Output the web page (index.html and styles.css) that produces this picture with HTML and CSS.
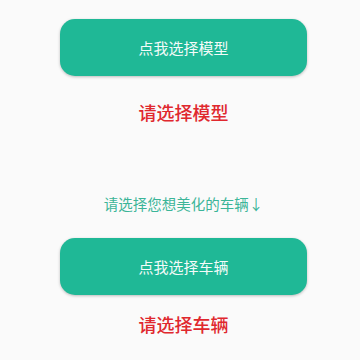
FILE: index.html
```html
<!DOCTYPE html>
<html lang="zh-CN">
<head>
    <meta charset="UTF-8">
    <title>选择</title>
    <link rel="stylesheet" href="styles.css">
</head>
<body>
<div class="page">
    <button class="pick-button">点我选择模型</button>
    <div class="status">请选择模型</div>

    <div class="hint">请选择您想美化的车辆↓</div>
    <button class="pick-button">点我选择车辆</button>
    <div class="status">请选择车辆</div>
</div>
</body>
</html>
```

FILE: styles.css
```css
body {
    margin: 0;
    padding: 0;
    background: #fafafa;
    font-family: "Noto Sans CJK SC", "Noto Sans", sans-serif;
}

.page {
    width: 360px;
    height: 360px;
    padding: 19px 53px 0 60px;
    box-sizing: border-box;
    display: flex;
    flex-direction: column;
    align-items: stretch;
}

.pick-button {
    display: block;
    height: 57px;
    border: none;
    border-radius: 15px;
    background: #1fb896;
    color: #f4fbf9;
    font-family: inherit;
    font-size: 15px;
    box-shadow: 0 1px 3px rgba(0, 0, 0, 0.25);
}

.status {
    margin-top: 24px;
    height: 24px;
    line-height: 24px;
    text-align: center;
    color: #e0282e;
    font-size: 18px;
    font-weight: 500;
}

.hint {
    margin-top: 70px;
    height: 20px;
    line-height: 20px;
    text-align: center;
    color: #3bb598;
    font-size: 14.5px;
}

.hint + .pick-button {
    margin-top: 24px;
}

.hint ~ .status {
    margin-top: 17px;
}
```
